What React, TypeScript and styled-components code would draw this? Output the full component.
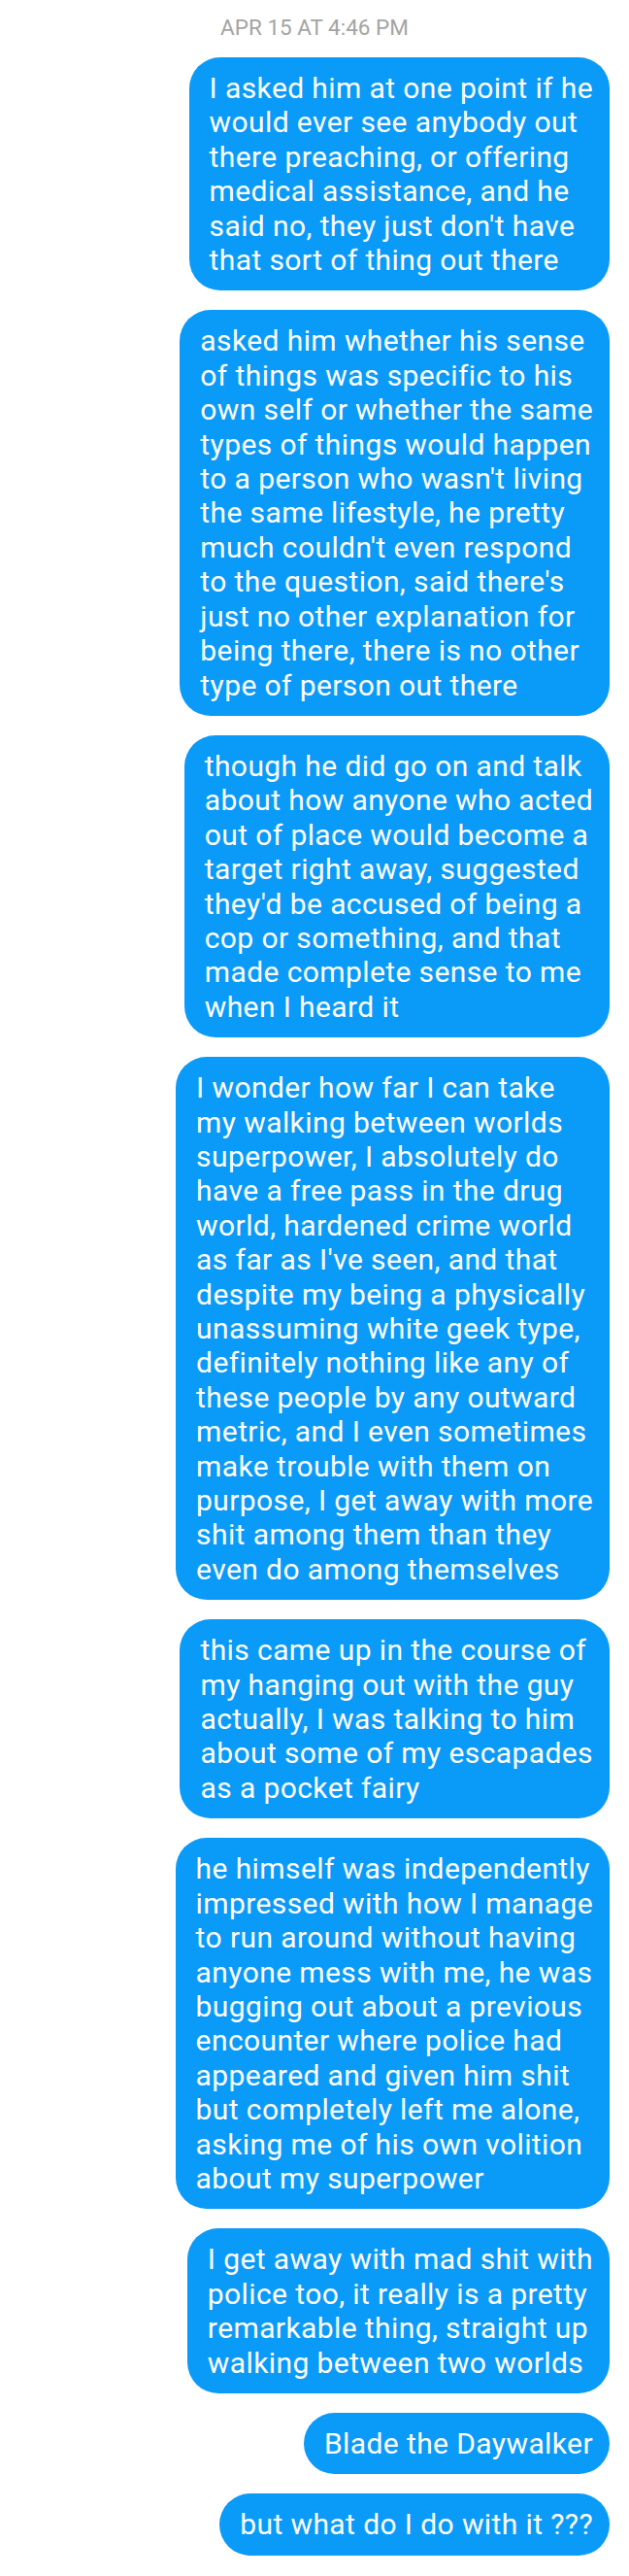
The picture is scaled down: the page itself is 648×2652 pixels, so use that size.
import React from "react";
import styled, { createGlobalStyle } from "styled-components";

const GlobalStyle = createGlobalStyle`
  html, body {
    margin: 0;
    padding: 0;
    background: #ffffff;
  }
  body {
    font-family: Roboto, "Noto Sans", "Liberation Sans", sans-serif;
  }
`;

const Thread = styled.main`
  width: 648px;
  box-sizing: border-box;
  display: flex;
  flex-direction: column;
  align-items: flex-end;
  gap: 20px;
  padding: 15px 20px 22px 0;
  background: #ffffff;
`;

const Timestamp = styled.div`
  align-self: stretch;
  padding-left: 20px;
  text-align: center;
  font-family: Roboto, sans-serif;
  font-size: 22.5px;
  line-height: 26px;
  color: #a4a4a4;
  margin-bottom: -2px;
`;

const Bubble = styled.div`
  box-sizing: border-box;
  background: #0a9af8;
  color: #ffffff;
  border-radius: 32px;
  padding: 14px 17px 14px 21px;
  font-family: Roboto, sans-serif;
  font-size: 30px;
  line-height: 35.4px;
  letter-spacing: 0.4px;
`;

const Line = styled.span`
  display: block;
  white-space: nowrap;
`;

const messages: string[][] = [
  [
    "I asked him at one point if he",
    "would ever see anybody out",
    "there preaching, or offering",
    "medical assistance, and he",
    "said no, they just don't have",
    "that sort of thing out there",
  ],
  [
    "asked him whether his sense",
    "of things was specific to his",
    "own self or whether the same",
    "types of things would happen",
    "to a person who wasn't living",
    "the same lifestyle, he pretty",
    "much couldn't even respond",
    "to the question, said there's",
    "just no other explanation for",
    "being there, there is no other",
    "type of person out there",
  ],
  [
    "though he did go on and talk",
    "about how anyone who acted",
    "out of place would become a",
    "target right away, suggested",
    "they'd be accused of being a",
    "cop or something, and that",
    "made complete sense to me",
    "when I heard it",
  ],
  [
    "I wonder how far I can take",
    "my walking between worlds",
    "superpower, I absolutely do",
    "have a free pass in the drug",
    "world, hardened crime world",
    "as far as I've seen, and that",
    "despite my being a physically",
    "unassuming white geek type,",
    "definitely nothing like any of",
    "these people by any outward",
    "metric, and I even sometimes",
    "make trouble with them on",
    "purpose, I get away with more",
    "shit among them than they",
    "even do among themselves",
  ],
  [
    "this came up in the course of",
    "my hanging out with the guy",
    "actually, I was talking to him",
    "about some of my escapades",
    "as a pocket fairy",
  ],
  [
    "he himself was independently",
    "impressed with how I manage",
    "to run around without having",
    "anyone mess with me, he was",
    "bugging out about a previous",
    "encounter where police had",
    "appeared and given him shit",
    "but completely left me alone,",
    "asking me of his own volition",
    "about my superpower",
  ],
  [
    "I get away with mad shit with",
    "police too, it really is a pretty",
    "remarkable thing, straight up",
    "walking between two worlds",
  ],
  ["Blade the Daywalker"],
  ["but what do I do with it ???"],
];

export default function App() {
  return (
    <>
      <GlobalStyle />
      <Thread>
        <Timestamp>APR 15 AT 4:46 PM</Timestamp>
        {messages.map((lines, i) => (
          <Bubble key={i}>
            {lines.map((l, j) => (
              <Line key={j}>{l}</Line>
            ))}
          </Bubble>
        ))}
      </Thread>
    </>
  );
}
